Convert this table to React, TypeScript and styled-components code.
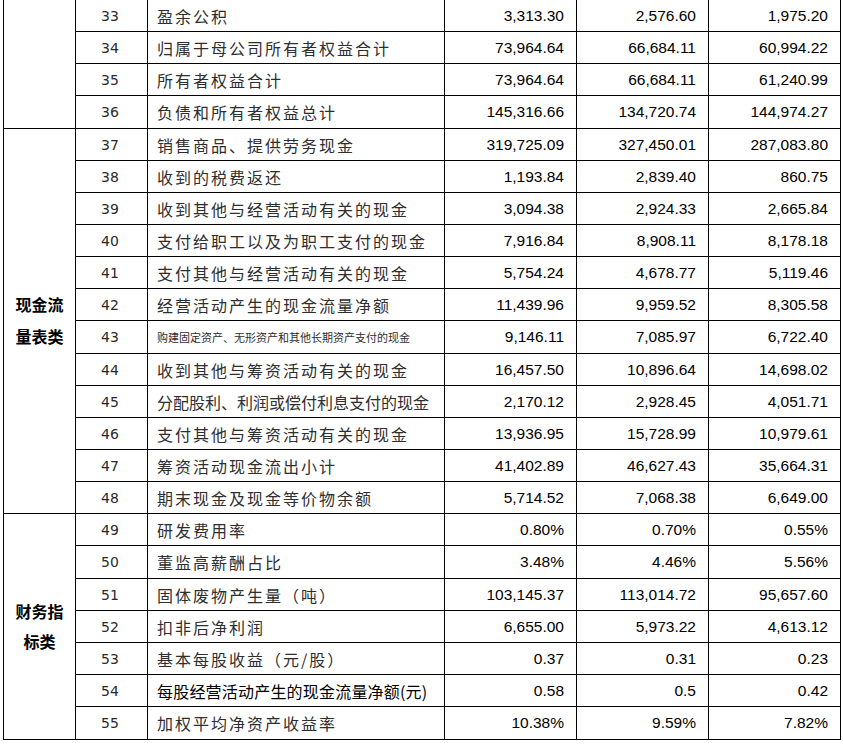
import React from 'react';
import styled, { createGlobalStyle } from 'styled-components';

interface Row {
  no: number;
  name: string;
  values: [string, string, string];
  // 'small' for the shrunk line, 'tight' for rows set without spacing
  fit?: 'small' | 'tight' | 'plain';
}

interface Section {
  label: string[];
  lineHeight: number;
  openTop?: boolean;
  rows: Array<Row>;
}

const ROW_H = 32.15;
const lineColor = '#000';

const sections: Array<Section> = [
  {
    label: [],
    lineHeight: 32,
    openTop: true,
    rows: [
      { no: 33, name: '盈余公积', values: ['3,313.30', '2,576.60', '1,975.20'] },
      { no: 34, name: '归属于母公司所有者权益合计', values: ['73,964.64', '66,684.11', '60,994.22'] },
      { no: 35, name: '所有者权益合计', values: ['73,964.64', '66,684.11', '61,240.99'] },
      { no: 36, name: '负债和所有者权益总计', values: ['145,316.66', '134,720.74', '144,974.27'] },
    ],
  },
  {
    label: ['现金流', '量表类'],
    lineHeight: 32,
    rows: [
      { no: 37, name: '销售商品、提供劳务现金', values: ['319,725.09', '327,450.01', '287,083.80'] },
      { no: 38, name: '收到的税费返还', values: ['1,193.84', '2,839.40', '860.75'] },
      { no: 39, name: '收到其他与经营活动有关的现金', values: ['3,094.38', '2,924.33', '2,665.84'] },
      { no: 40, name: '支付给职工以及为职工支付的现金', values: ['7,916.84', '8,908.11', '8,178.18'] },
      { no: 41, name: '支付其他与经营活动有关的现金', values: ['5,754.24', '4,678.77', '5,119.46'] },
      { no: 42, name: '经营活动产生的现金流量净额', values: ['11,439.96', '9,959.52', '8,305.58'] },
      {
        no: 43,
        name: '购建固定资产、无形资产和其他长期资产支付的现金',
        values: ['9,146.11', '7,085.97', '6,722.40'],
        fit: 'small',
      },
      { no: 44, name: '收到其他与筹资活动有关的现金', values: ['16,457.50', '10,896.64', '14,698.02'] },
      {
        no: 45,
        name: '分配股利、利润或偿付利息支付的现金',
        values: ['2,170.12', '2,928.45', '4,051.71'],
        fit: 'tight',
      },
      { no: 46, name: '支付其他与筹资活动有关的现金', values: ['13,936.95', '15,728.99', '10,979.61'] },
      { no: 47, name: '筹资活动现金流出小计', values: ['41,402.89', '46,627.43', '35,664.31'] },
      { no: 48, name: '期末现金及现金等价物余额', values: ['5,714.52', '7,068.38', '6,649.00'] },
    ],
  },
  {
    label: ['财务指', '标类'],
    lineHeight: 30,
    rows: [
      { no: 49, name: '研发费用率', values: ['0.80%', '0.70%', '0.55%'] },
      { no: 50, name: '董监高薪酬占比', values: ['3.48%', '4.46%', '5.56%'] },
      { no: 51, name: '固体废物产生量（吨）', values: ['103,145.37', '113,014.72', '95,657.60'] },
      { no: 52, name: '扣非后净利润', values: ['6,655.00', '5,973.22', '4,613.12'] },
      { no: 53, name: '基本每股收益（元/股）', values: ['0.37', '0.31', '0.23'] },
      {
        no: 54,
        name: '每股经营活动产生的现金流量净额(元)',
        values: ['0.58', '0.5', '0.42'],
        fit: 'plain',
      },
      { no: 55, name: '加权平均净资产收益率', values: ['10.38%', '9.59%', '7.82%'] },
    ],
  },
];

const totalRows = sections.reduce((n, s) => n + s.rows.length, 0);

const GlobalStyle = createGlobalStyle`
  html, body {
    margin: 0;
    padding: 0;
    background: #fff;
  }
  body {
    font-family: "Noto Sans CJK SC", "Noto Sans", sans-serif;
  }
`;

const Page = styled.div`
  padding: 0 0 0 3px;
`;

const Grid = styled.div<{ $rows: number }>`
  display: grid;
  grid-template-columns: 72px 72px 297px 132px 132px 132px;
  grid-template-rows: repeat(${(p) => p.$rows}, ${ROW_H}px);
  width: max-content;
  border-left: 1px solid ${lineColor};
  border-bottom: 1px solid ${lineColor};
`;

const Cell = styled.div<{ $top?: boolean }>`
  box-sizing: border-box;
  display: flex;
  align-items: center;
  border-right: 1px solid ${lineColor};
  border-top: 1px solid ${(p) => (p.$top ? lineColor : 'transparent')};
  margin-top: -1px;
  height: calc(100% + 1px);
  overflow: hidden;
  white-space: nowrap;
`;

const CategoryCell = styled(Cell)<{ $start: number; $span: number; $lh: number }>`
  grid-column: 1;
  grid-row: ${(p) => p.$start} / span ${(p) => p.$span};
  flex-direction: column;
  justify-content: center;
  font-size: 16px;
  font-weight: 700;
  line-height: ${(p) => p.$lh}px;
  color: #000;
  padding-bottom: 2px;
`;

const NoCell = styled(Cell)`
  justify-content: center;
  font-family: "DejaVu Sans", "Liberation Sans", sans-serif;
  font-size: 14px;
  color: #2a2a2a;
  padding-right: 3px;
`;

const nameSize = { small: '11px', tight: '16px', plain: '16px' };
const nameSpacing = { small: '0', tight: '0', plain: '0.2px' };

const NameCell = styled(Cell)<{ $fit?: Row['fit'] }>`
  padding-left: 9px;
  font-size: ${(p) => (p.$fit ? nameSize[p.$fit] : '16px')};
  letter-spacing: ${(p) => (p.$fit ? nameSpacing[p.$fit] : '2px')};
  color: ${(p) => (p.$fit === 'plain' ? '#000' : '#2e2e2e')};
`;

const ValueCell = styled(Cell)`
  justify-content: flex-end;
  padding-right: 12px;
  font-family: "Liberation Sans", Arial, sans-serif;
  font-size: 15.5px;
  color: #000;
`;

const App: React.FC = () => {
  let start = 1;
  return (
    <>
      <GlobalStyle />
      <Page>
        <Grid $rows={totalRows}>
          {sections.map((section, si) => {
            const first = start;
            start += section.rows.length;
            return (
              <React.Fragment key={si}>
                <CategoryCell
                  $start={first}
                  $span={section.rows.length}
                  $lh={section.lineHeight}
                  $top={!section.openTop}
                >
                  {section.label.map((l) => (
                    <span key={l}>{l}</span>
                  ))}
                </CategoryCell>
                {section.rows.map((row) => (
                  <React.Fragment key={row.no}>
                    <NoCell $top>{row.no}</NoCell>
                    <NameCell $top $fit={row.fit}>
                      {row.name}
                    </NameCell>
                    {row.values.map((v, i) => (
                      <ValueCell $top key={i}>
                        {v}
                      </ValueCell>
                    ))}
                  </React.Fragment>
                ))}
              </React.Fragment>
            );
          })}
        </Grid>
      </Page>
    </>
  );
};

export default App;
